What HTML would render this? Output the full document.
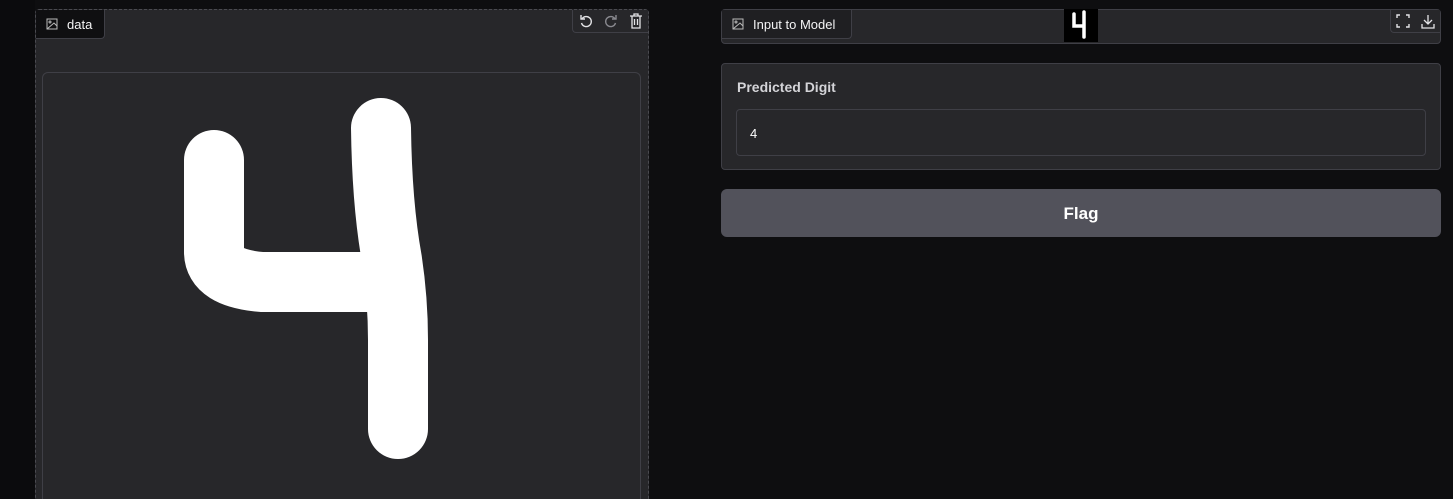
<!DOCTYPE html>
<html style="width:1453px;height:499px;overflow:hidden"><head><meta charset="utf-8"><style>
*{box-sizing:border-box;margin:0;padding:0}
body{width:1453px;height:499px;background:#0e0e10;position:relative;overflow:hidden;font-family:"Liberation Sans",sans-serif;color:#e4e4e7}
.abs{position:absolute}
.panel{background:#27272a;border:1px solid #3f3f46;border-radius:4px}
.tab{background:#0f0f11;border:1px solid #3f3f46;border-top:none;border-left:none;border-radius:0 0 4px 0;font-size:13px;color:#f4f4f5;display:flex;align-items:center;gap:9px;padding-left:10px}
.tb{background:#27272a;border:1px solid #3f3f46;border-top:none;border-right:none;border-radius:0 0 0 4px;display:flex;align-items:center;justify-content:space-around}
</style></head><body>
<div class="abs" style="left:0;top:0;width:35px;height:499px;background:#0b0b0d"></div>
<div class="abs" style="left:35px;top:9px;width:614px;height:495px;background:#27272a;border:1px dashed #4a4a50;border-radius:4px"></div>
<div class="abs tab" style="left:36px;top:10px;width:69px;height:29px">
<svg width="12" height="12" viewBox="0 0 12 12" fill="none" stroke="#bbb" stroke-width="1"><rect x="1" y="1" width="10" height="10"/><circle cx="4" cy="4" r="1"/><path d="M1 11 L8 5 L11 8"/></svg><span>data</span></div>
<div class="abs tb" style="left:572px;top:10px;width:76px;height:23px">
<svg width="16" height="16" viewBox="0 0 16 16" fill="none" stroke="#e4e4e7" stroke-width="1.4"><path d="M4 6 A5 5 0 1 1 3.5 10"/><path d="M3 2 V6 H7"/></svg>
<svg width="16" height="16" viewBox="0 0 16 16" fill="none" stroke="#8a8a90" stroke-width="1.4"><path d="M12 6 A5 5 0 1 0 12.5 10"/><path d="M13 2 V6 H9"/></svg>
<svg width="14" height="16" viewBox="0 0 14 16" fill="none" stroke="#e4e4e7" stroke-width="1.3"><path d="M1 3 H13 M5 3 V1 H9 V3 M3 3 V15 H11 V3 M5.5 6 V12 M8.5 6 V12"/></svg></div>
<div class="abs" style="left:42px;top:72px;width:599px;height:440px;border:1px solid #3f3f46;border-radius:6px;background:#27272a"></div>
<svg class="abs" style="left:0;top:0" width="700" height="499"><g fill="none" stroke="#fff" stroke-width="60" stroke-linecap="round" stroke-linejoin="round"><path d="M214 160 L214 252 Q214 278 262 282 L372 282"/><path d="M381 128 Q382 205 392 260 Q398 300 398 340 L398 429"/></g></svg>

<div class="abs panel" style="left:721px;top:9px;width:720px;height:35px"></div>
<div class="abs tab" style="left:722px;top:10px;width:130px;height:29px;background:#1f1f22">
<svg width="12" height="12" viewBox="0 0 12 12" fill="none" stroke="#bbb" stroke-width="1"><rect x="1" y="1" width="10" height="10"/><circle cx="4" cy="4" r="1"/><path d="M1 11 L8 5 L11 8"/></svg><span>Input to Model</span></div>
<svg class="abs" style="left:1064px;top:9px" width="34" height="33" viewBox="0 0 34 33"><rect width="34" height="33" fill="#000"/><path d="M10 5 V17 H20 M20 3 V28" stroke="#fff" stroke-width="3.5" fill="none" stroke-linecap="round"/></svg>
<div class="abs tb" style="left:1390px;top:10px;width:50px;height:23px">
<svg width="14" height="14" viewBox="0 0 14 14" fill="none" stroke="#e4e4e7" stroke-width="1.4"><path d="M1 4 V1 H4 M10 1 H13 V4 M13 10 V13 H10 M4 13 H1 V10"/></svg>
<svg width="14" height="15" viewBox="0 0 14 15" fill="none" stroke="#e4e4e7" stroke-width="1.3"><path d="M7 1 V10 M3 6 L7 10 L11 6 M1 10 V14 H13 V10"/></svg></div>

<div class="abs panel" style="left:721px;top:63px;width:720px;height:107px"></div>
<div class="abs" style="left:737px;top:79px;font-size:14px;font-weight:bold;color:#d4d4d8">Predicted Digit</div>
<div class="abs" style="left:736px;top:109px;width:690px;height:47px;background:#27272a;border:1px solid #3f3f46;border-radius:4px;font-size:13px;padding:16px 0 0 13px;color:#fff">4</div>

<div class="abs" style="left:721px;top:189px;width:720px;height:48px;background:#52525b;border-radius:6px;display:flex;align-items:center;justify-content:center;font-size:17px;font-weight:bold;color:#fff;padding-top:2px">Flag</div>
</body></html>
